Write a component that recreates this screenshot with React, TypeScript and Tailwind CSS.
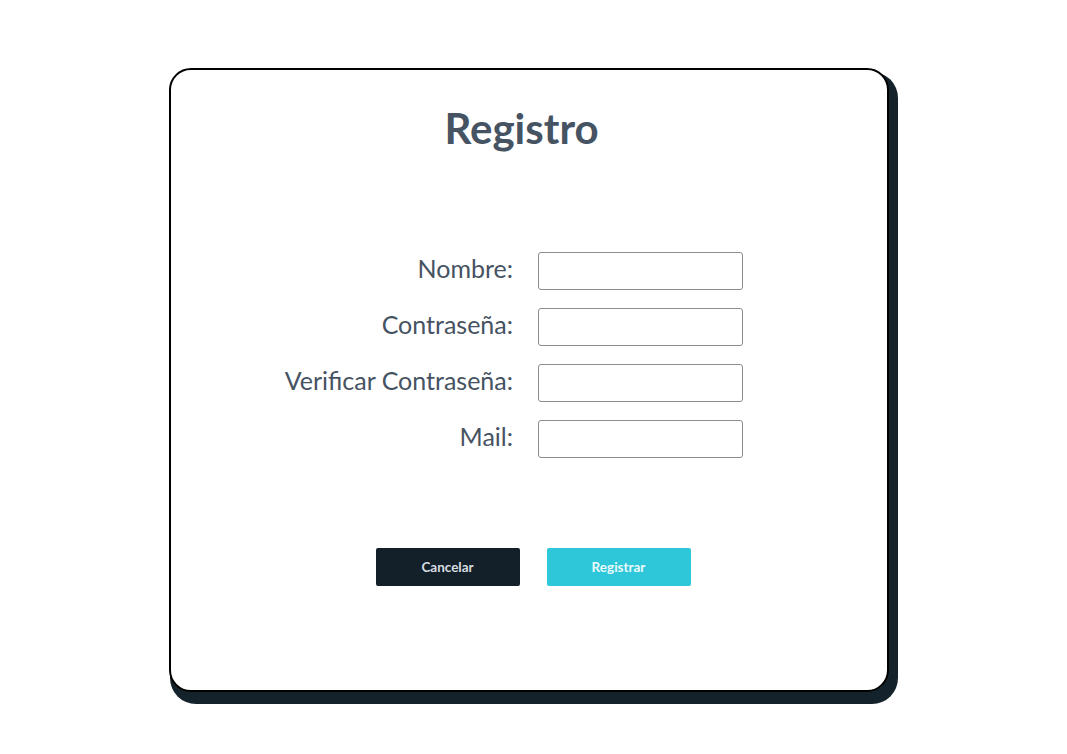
export default function App() {
  const fields = ["Nombre:", "Contraseña:", "Verificar Contraseña:", "Mail:"];

  return (
    <div className="min-h-screen bg-white font-['Lato','Liberation_Sans',sans-serif]">
      <div className="pt-[68px] pl-[169px]">
        <div className="w-[720px] h-[624px] rounded-[22px] border-2 border-black bg-white shadow-[5px_8px_0_4px_#14232b] flex flex-col">
          <h1 className="pt-[33px] pr-[15px] text-center text-[42px] leading-[50px] font-bold text-[#465362]">
            Registro
          </h1>

          <div className="mt-[99px] grid grid-cols-[342px_205px] gap-x-[25px] gap-y-[18px]">
            {fields.map((f) => (
              <div key={f} className="contents">
                <label className="self-start text-right text-[25px] leading-[33px] text-[#465362]">
                  {f}
                </label>
                <input
                  type="text"
                  className="h-[38px] w-[205px] rounded-[3px] border border-[#8c8c8c] bg-white px-2 outline-none"
                />
              </div>
            ))}
          </div>

          <div className="mt-[90px] flex justify-center gap-[27px] pl-[8px]">
            <button className="h-[38px] w-[144px] rounded-[2px] bg-[#13202a] text-[13.5px] font-bold text-[#d9dde0]">
              Cancelar
            </button>
            <button className="h-[38px] w-[144px] rounded-[2px] bg-[#2ec6d9] text-[13.5px] font-bold text-[#eafafc]">
              Registrar
            </button>
          </div>
        </div>
      </div>
    </div>
  );
}
